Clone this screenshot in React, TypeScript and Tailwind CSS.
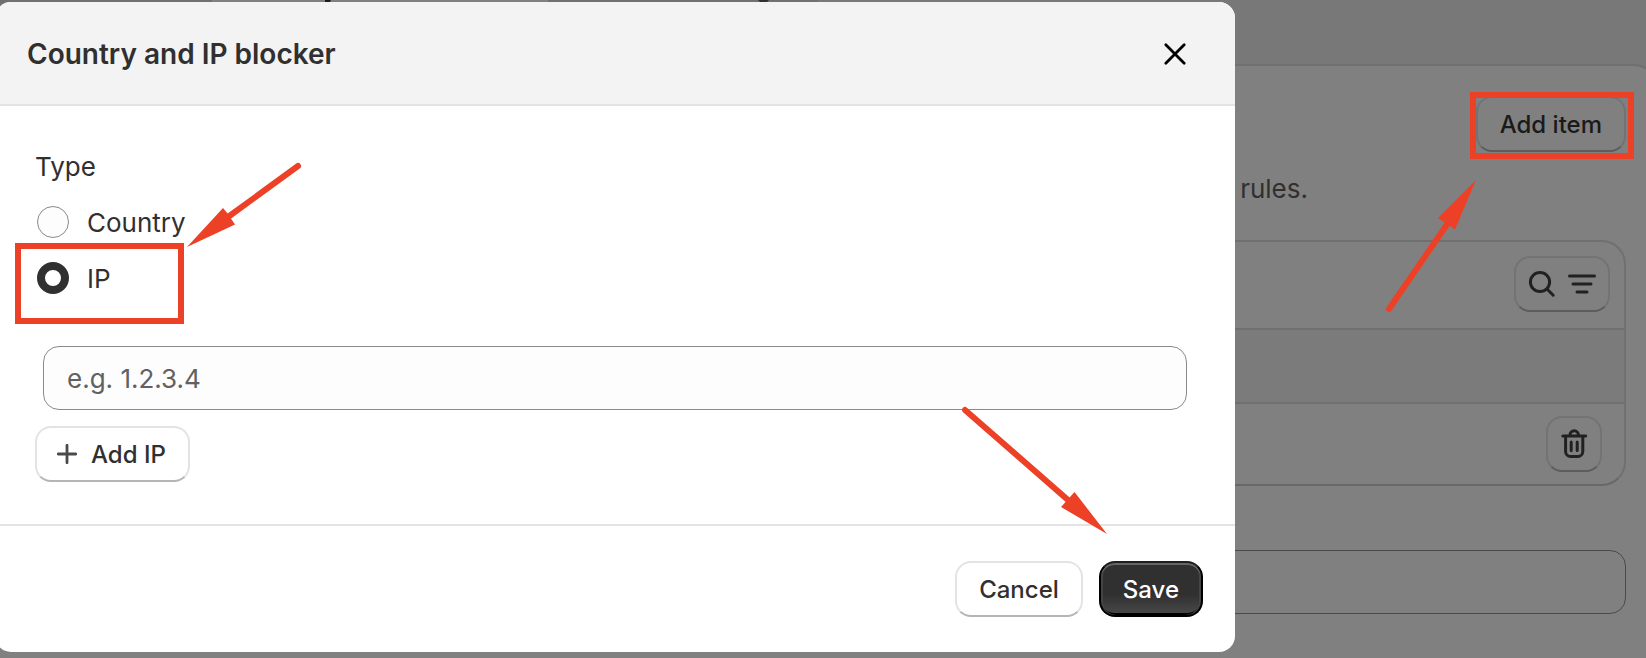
import { useId, useState, type ReactNode } from "react";

const FONT = "font-[Inter,'Liberation_Sans',sans-serif]";

function PlusIcon() {
  return (
    <svg width="20" height="20" viewBox="0 0 20 20" fill="none" aria-hidden="true">
      <path d="M10 1.3v17.4M1.3 10h17.4" stroke="#4a4a4a" strokeWidth="2.8" strokeLinecap="round" />
    </svg>
  );
}

function CloseIcon() {
  return (
    <svg width="24" height="24" viewBox="0 0 24 24" fill="none" aria-hidden="true">
      <path d="M2.8 2.8l18.4 18.4M21.2 2.8L2.8 21.2" stroke="#000" strokeWidth="2.8" strokeLinecap="round" />
    </svg>
  );
}

function SearchIcon() {
  return (
    <svg width="28" height="28" viewBox="0 0 28 28" fill="none" aria-hidden="true">
      <circle cx="12" cy="12" r="9.6" stroke="#212121" strokeWidth="3" />
      <path d="M19 19l6.2 6.2" stroke="#212121" strokeWidth="3" strokeLinecap="round" />
    </svg>
  );
}

function FilterIcon() {
  return (
    <svg width="28" height="28" viewBox="0 0 28 28" fill="none" aria-hidden="true">
      <path d="M1.5 6h25M5 14h18M9 22h10" stroke="#212121" strokeWidth="3" strokeLinecap="round" />
    </svg>
  );
}

function TrashIcon() {
  return (
    <svg width="28" height="32" viewBox="0 0 28 32" fill="none" aria-hidden="true">
      <path
        d="M2.8 8h22.9M10 8v-1a4.2 4.2 0 0 1 8.4 0v1M5.6 8v15.4a5 5 0 0 0 5 5h7.2a5 5 0 0 0 5-5V8"
        stroke="#212121"
        strokeWidth="3"
        strokeLinecap="round"
      />
      <path d="M11.2 14v8.4M17.2 14v8.4" stroke="#212121" strokeWidth="3" strokeLinecap="round" />
    </svg>
  );
}

function DimButton({ className, label, children }: { className: string; label?: string; children: ReactNode }) {
  return (
    <button
      type="button"
      aria-label={label}
      className={`flex h-14 items-center justify-center rounded-2xl border-2 border-[#737373] border-b-[#5c5c5c] ${className}`}
    >
      {children}
    </button>
  );
}

function RadioOption({ label, checked, onSelect }: { label: string; checked: boolean; onSelect: () => void }) {
  const id = useId();
  return (
    <div className="flex h-14 items-center gap-[18px]">
      <input
        id={id}
        type="radio"
        name="type"
        checked={checked}
        onChange={onSelect}
        className="size-8 shrink-0 appearance-none rounded-full border border-[#8a8a8a] bg-[#fdfdfd] checked:border-8 checked:border-[#303030] checked:bg-white"
      />
      <label htmlFor={id} className="pt-0.5">
        {label}
      </label>
    </div>
  );
}

function SettingsPage() {
  return (
    <div className="flex min-h-screen flex-col bg-[#787878] text-[26px]/10 text-[#303030]">
      <div className="flex h-16 shrink-0 items-start">
        <div className="h-2 w-[212px] bg-[#707070]" />
        <div className="flex h-2 w-[336px] bg-[#808080] pl-28">
          <svg width="8" height="2" viewBox="0 0 8 2" aria-hidden="true">
            <path d="M1 0h6l-1 2H1z" fill="#1a1a1a" />
          </svg>
        </div>
        <div className="flex h-2 w-[270px] bg-[#707070] pl-[210px]">
          <svg width="11" height="2" viewBox="0 0 11 2" aria-hidden="true">
            <path d="M0 0h11l-2 2H2z" fill="#303030" />
          </svg>
        </div>
      </div>
      <main className="-mr-3 flex-1 rounded-tr-3xl border-t-2 border-r-2 border-[#707070] bg-[#808080] pt-[30px] pr-[30px]">
        <div className="flex justify-end">
          <DimButton className="px-[22px] pt-0.5 text-2xl font-medium text-[#1a1a1a]">Add item</DimButton>
        </div>
        <p className="mt-[17px] pr-[318px] text-right">rules.</p>
        <section className="mt-[31px] overflow-hidden rounded-3xl border-2 border-[#707070] border-b-[#686868]">
          <div className="flex justify-end border-b-2 border-[#707070] px-3.5 pt-3.5 pb-4">
            <DimButton className="w-24 gap-3" label="Search and filter">
              <SearchIcon />
              <FilterIcon />
            </DimButton>
          </div>
          <div className="h-[74px] border-b-2 border-[#707070] bg-[#7b7b7b]" />
          <div className="flex justify-end px-[22px] py-3">
            <DimButton className="w-14" label="Delete">
              <TrashIcon />
            </DimButton>
          </div>
        </section>
        <input
          aria-label="Redirect"
          className="mt-16 block h-16 w-full rounded-2xl border border-[#4a4a4a] bg-transparent px-6"
        />
      </main>
    </div>
  );
}

function BlockerDialog() {
  const [type, setType] = useState("IP");
  return (
    <div
      role="dialog"
      aria-labelledby="dialog-title"
      className="absolute top-0.5 -left-[5px] w-[1240px] overflow-hidden rounded-2xl bg-white text-[26px]/10 text-[#303030]"
    >
      <header className="flex items-center justify-between border-b-2 border-[#e3e3e3] bg-[#f3f3f3] pt-8 pr-12 pb-[30px] pl-8">
        <h1 id="dialog-title" className="text-[28px]/10 font-semibold">
          Country and IP blocker
        </h1>
        <button type="button" aria-label="Close">
          <CloseIcon />
        </button>
      </header>

      <div className="px-10 pt-[41px] pb-[42px]">
        <fieldset>
          <legend className="h-[47px]">Type</legend>
          <div className="px-0.5">
            <RadioOption label="Country" checked={type === "Country"} onSelect={() => setType("Country")} />
            <RadioOption label="IP" checked={type === "IP"} onSelect={() => setType("IP")} />
          </div>
        </fieldset>
        <div className="mt-10 px-2">
          <input
            type="text"
            aria-label="IP address"
            placeholder="e.g. 1.2.3.4"
            className="block h-16 w-full rounded-2xl border border-[#8a8a8a] bg-[#fdfdfd] px-[23px] placeholder:text-[#616161]"
          />
        </div>
        <button
          type="button"
          className="mt-4 flex h-14 items-center gap-3.5 rounded-2xl border-2 border-[#e3e3e3] border-b-[#b5b5b5] pr-[22px] pl-5 text-2xl font-medium"
        >
          <PlusIcon />
          <span className="pt-0.5">Add IP</span>
        </button>
      </div>

      <footer className="flex justify-end gap-4 border-t-2 border-[#e3e3e3] px-8 py-[35px] text-2xl font-medium">
        <button
          type="button"
          className="h-14 rounded-2xl border-2 border-[#e3e3e3] border-b-[#b5b5b5] px-[22px] pt-0.5"
        >
          Cancel
        </button>
        <button
          type="button"
          className="h-14 rounded-2xl border-2 border-black border-t-[#1f1f1f] bg-linear-to-b from-[#303030] from-60% to-[#4a4a4a] px-[22px] pt-0.5 text-white shadow-[inset_0_2px_0_#666,inset_2px_0_0_#444,inset_-2px_0_0_#444,inset_0_-2px_0_#000]"
        >
          Save
        </button>
      </footer>
    </div>
  );
}

// Red call-outs drawn over the page
function Annotations() {
  return (
    <>
      <div className="pointer-events-none absolute top-[243px] left-[15px] h-[81px] w-[169px] border-6 border-[#ec4127]" />
      <div className="pointer-events-none absolute top-[92px] left-[1470px] h-[67px] w-[164px] border-6 border-[#ec4127]" />
      <svg
        className="pointer-events-none absolute top-0 left-0"
        width="1646"
        height="658"
        viewBox="0 0 1646 658"
        fill="#ec4127"
        aria-hidden="true"
      >
        <g stroke="#ec4127" strokeWidth="6" strokeLinecap="round">
          <path d="M298 166L228 217" />
          <path d="M965 410L1068 500" />
          <path d="M1389 309L1448 223" />
        </g>
        <path d="M187 247L223 208L228 214L235 224.500Z" />
        <path d="M1107 534L1061 507L1074.500 492Z" />
        <path d="M1476 180L1438 218L1455 229.500Z" />
      </svg>
    </>
  );
}

export default function App() {
  return (
    <div className={`relative min-h-screen overflow-hidden ${FONT}`}>
      <SettingsPage />
      <BlockerDialog />
      <Annotations />
    </div>
  );
}
